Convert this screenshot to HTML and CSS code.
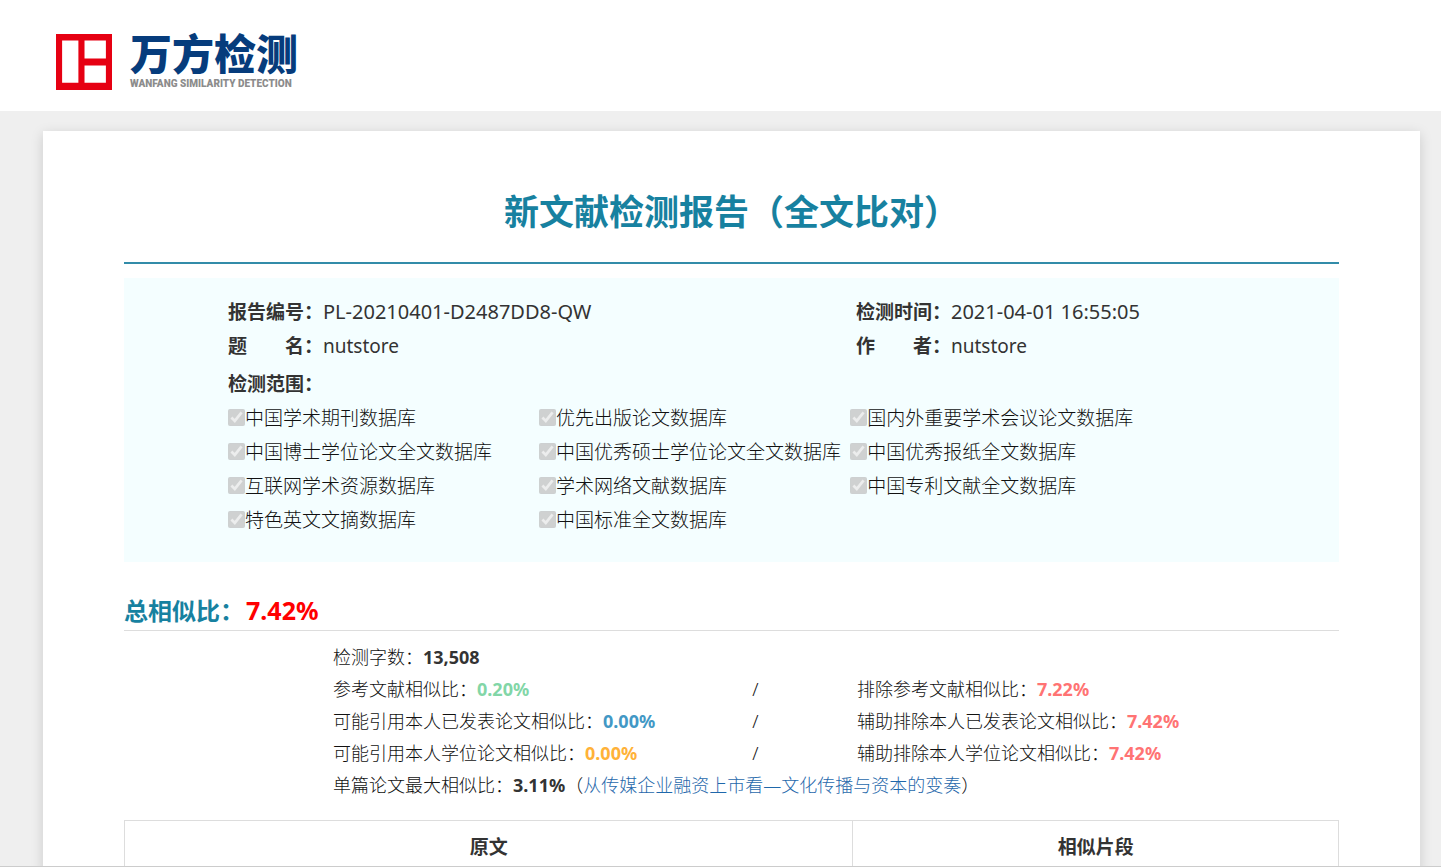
FILE: index.html
```
<!DOCTYPE html>
<html lang="zh-CN">
<head>
    <meta charset="UTF-8">
    <meta name="viewport" content="width=device-width, initial-scale=1.0">
    <title>新文献检测报告（全文比对）</title>
    <link rel="stylesheet" href="styles.css">
</head>
<body>
    <!-- Header -->
    <header class="header">
        <svg class="logo-mark" viewBox="0 0 55 55" aria-hidden="true">
            <path fill="#e60012" fill-rule="evenodd" d="M0 0H55V55H0ZM6 6.500V48H22V6.500ZM28 6.500V24H49V6.500ZM28 31V48H49V31Z"/>
        </svg>
        <div class="logo-text">
            <span class="logo-name">万方检测</span>
            <span class="logo-sub">WANFANG SIMILARITY DETECTION</span>
        </div>
    </header>

    <!-- Report -->
    <main class="report">
        <h1>新文献检测报告（全文比对）</h1>

        <section class="info">
            <div class="info-grid">
                <div><b>报告编号：</b><span class="code">PL-20210401-D2487DD8-QW</span></div>
                <div><b>检测时间：</b><span class="code">2021-04-01 16:55:05</span></div>
                <div><b>题&emsp;&emsp;名：</b>nutstore</div>
                <div><b>作&emsp;&emsp;者：</b>nutstore</div>
            </div>
            <div class="scope-title"><b>检测范围：</b></div>
            <div class="scope-grid">
                <label><input type="checkbox" checked disabled>中国学术期刊数据库</label>
                <label><input type="checkbox" checked disabled>优先出版论文数据库</label>
                <label><input type="checkbox" checked disabled>国内外重要学术会议论文数据库</label>
                <label><input type="checkbox" checked disabled>中国博士学位论文全文数据库</label>
                <label><input type="checkbox" checked disabled>中国优秀硕士学位论文全文数据库</label>
                <label><input type="checkbox" checked disabled>中国优秀报纸全文数据库</label>
                <label><input type="checkbox" checked disabled>互联网学术资源数据库</label>
                <label><input type="checkbox" checked disabled>学术网络文献数据库</label>
                <label><input type="checkbox" checked disabled>中国专利文献全文数据库</label>
                <label><input type="checkbox" checked disabled>特色英文文摘数据库</label>
                <label><input type="checkbox" checked disabled>中国标准全文数据库</label>
            </div>
        </section>

        <h2>总相似比：<span class="total">7.42%</span></h2>

        <section class="stats">
            <div class="wide">检测字数：<b>13,508</b></div>

            <div>参考文献相似比：<b class="green">0.20%</b></div>
            <div>/</div>
            <div>排除参考文献相似比：<b class="pink">7.22%</b></div>

            <div>可能引用本人已发表论文相似比：<b class="blue">0.00%</b></div>
            <div>/</div>
            <div>辅助排除本人已发表论文相似比：<b class="pink">7.42%</b></div>

            <div>可能引用本人学位论文相似比：<b class="orange">0.00%</b></div>
            <div>/</div>
            <div>辅助排除本人学位论文相似比：<b class="pink">7.42%</b></div>

            <div class="wide">单篇论文最大相似比：<b>3.11%</b>（<a href="#">从传媒企业融资上市看—文化传播与资本的变奏</a>）</div>
        </section>

        <!-- Comparison table -->
        <table class="compare">
            <thead>
                <tr>
                    <th class="col-source">原文</th>
                    <th>相似片段</th>
                </tr>
            </thead>
        </table>
    </main>
    <div class="bottom-line"></div>
</body>
</html>
```

FILE: styles.css
```
* {
    box-sizing: border-box;
}
body {
    display: flex;
    flex-direction: column;
    height: 100vh;
    margin: 0;
    overflow: hidden;
    background-color: #efefef;
    color: #333;
    font-family: "Noto Sans", "Noto Sans CJK SC", sans-serif;
    font-size: 19px;
    line-height: 34px;
}
b {
    color: #333;
    font-weight: 700;
}
.header {
    display: flex;
    flex: none;
    gap: 18px;
    height: 111px;
    padding: 34px 56px 0;
    background-color: #fff;
}
.logo-mark {
    width: 56px;
    height: 56px;
}
.logo-text {
    display: flex;
    flex-direction: column;
    gap: 6px;
    white-space: nowrap;
}
.logo-name {
    color: #063c7c;
    font-family: "Noto Sans CJK SC", sans-serif;
    font-size: 42px;
    font-weight: 900;
    line-height: 36px;
}
.logo-sub {
    color: #8c8c8c;
    font-family: Roboto, Arial, sans-serif;
    font-size: 10px;
    font-weight: 900;
    line-height: 16px;
}
.report {
    flex: 1 0 auto;
    margin: 20px 21px 0 43px;
    padding: 0 81px;
    background-color: #fff;
    box-shadow: 0 3px 12px rgba(0, 0, 0, 0.15);
}
h1 {
    margin: 0 0 14px;
    padding: 56px 0 25px;
    border-bottom: 2px solid #328ca9;
    color: #1781a0;
    font-size: 35px;
    line-height: 50px;
    text-align: center;
}
.info {
    padding: 17px 0 25px 104px;
    background-color: #f4feff;
}
.info-grid {
    display: grid;
    grid-template-columns: 13fr 10fr;
}
.code {
    font-size: 20px;
}
.scope-title {
    margin-top: 4px;
}
.scope-grid {
    display: grid;
    grid-template-columns: repeat(3, 1fr);
    width: 84%;
    color: #111;
    font-weight: 300;
    white-space: nowrap;
}
.scope-grid label {
    display: flex;
    align-items: center;
}
.scope-grid input {
    width: 17px;
    height: 17px;
    margin: 0 0 2px;
}
h2 {
    margin: 29px 0 10px;
    border-bottom: 1px solid #ddd;
    color: #1781a0;
    font-size: 24px;
    line-height: 38px;
}
.total {
    margin-left: 2px;
    color: #f00;
    font-size: 25px;
}
.stats {
    display: grid;
    grid-template-columns: 40fr 10fr 46fr;
    padding-left: 209px;
    color: #111;
    font-size: 18px;
    font-weight: 300;
    line-height: 32px;
}
.wide {
    grid-column: 1 / -1;
}
.green {
    color: #82d6a7;
}
.blue {
    color: #4298c5;
}
.orange {
    color: #ffb238;
}
.pink {
    color: #ff7373;
}
a {
    color: #1f68ab;
    text-decoration: none;
}
.compare {
    width: 100%;
    margin-top: 19px;
    border-collapse: collapse;
}
.compare th {
    padding: 9px;
    border: 1px solid #ddd;
}
.col-source {
    width: 60%;
}
.bottom-line {
    position: fixed;
    right: 0;
    bottom: 0;
    left: 0;
    height: 1px;
    background-color: #ccc;
}
```
